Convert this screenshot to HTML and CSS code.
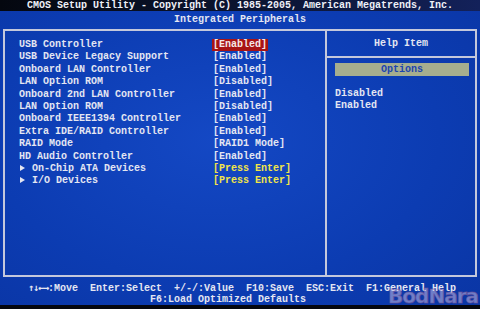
FILE: index.html
```html
<!DOCTYPE html>
<html lang="en">
  <head>
    <meta charset="UTF-8" />
    <meta name="viewport" content="width=device-width, initial-scale=1.0" />
    <title>CMOS Setup Utility</title>
    <link rel="stylesheet" href="styles.css">
  </head>
  <body>
    <!-- top bar -->
    <div class="top-bar">CMOS Setup Utility - Copyright (C) 1985-2005, American Megatrends, Inc.</div>
    <div class="page-title">Integrated Peripherals</div>

    <!-- main frame -->
    <div class="frame">
      <ul class="setting-list">
        <li class="setting-row"><span>USB Controller</span><span class="value selected">[Enabled]</span></li>
        <li class="setting-row"><span>USB Device Legacy Support</span><span class="value">[Enabled]</span></li>
        <li class="setting-row"><span>Onboard LAN Controller</span><span class="value">[Enabled]</span></li>
        <li class="setting-row"><span>LAN Option ROM</span><span class="value">[Disabled]</span></li>
        <li class="setting-row"><span>Onboard 2nd LAN Controller</span><span class="value">[Enabled]</span></li>
        <li class="setting-row"><span>LAN Option ROM</span><span class="value">[Disabled]</span></li>
        <li class="setting-row"><span>Onboard IEEE1394 Controller</span><span class="value">[Enabled]</span></li>
        <li class="setting-row"><span>Extra IDE/RAID Controller</span><span class="value">[Enabled]</span></li>
        <li class="setting-row"><span>RAID Mode</span><span class="value">[RAID1 Mode]</span></li>
        <li class="setting-row"><span>HD Audio Controller</span><span class="value">[Enabled]</span></li>
        <li class="setting-row"><span><i class="arrow"></i>On-Chip ATA Devices</span><span class="value sub">[Press Enter]</span></li>
        <li class="setting-row"><span><i class="arrow"></i>I/O Devices</span><span class="value sub">[Press Enter]</span></li>
      </ul>
      <div class="help-panel">
        <div class="help-title">Help Item</div>
        <div class="options-bar">Options</div>
        <ul class="option-list">
          <li>Disabled</li>
          <li>Enabled</li>
        </ul>
      </div>
    </div>

    <!-- key help -->
    <div class="key-help">
      <div class="key-line first"><span class="arrows">↑↓←→</span>:Move  Enter:Select  +/-/:Value  F10:Save  ESC:Exit  F1:General Help</div>
      <div class="key-line second">F6:Load Optimized Defaults</div>
    </div>
    <div class="bottom-strip"></div>
    <div class="watermark">BodNara</div>
  </body>
</html>
```

FILE: styles.css
```css
/*global*/
* {
  margin: 0;
  padding: 0;
  box-sizing: border-box;
}

body {
  width: 480px;
  height: 309px;
  overflow: hidden;
  position: relative;
  background: radial-gradient(ellipse at 45% 45%, #1448c4 0%, #0c3cb2 60%, #0a35a4 100%);
  font-family: "Liberation Mono", "DejaVu Sans Mono", monospace;
  font-size: 10px;
  font-weight: bold;
  color: #e4e6f2;
}

ul {
  list-style: none;
}

/*header*/
.top-bar {
  height: 11px;
  line-height: 11px;
  text-align: center;
  white-space: pre;
  background: linear-gradient(90deg, #04070f 0%, #0b1533 55%, #13215a 100%);
  color: #eef0f8;
}

.page-title {
  height: 18px;
  line-height: 17px;
  text-align: center;
}

/*frame*/
.frame {
  height: 248px;
  margin: 0 3px 0 3px;
  border: 2px solid #c4c8dc;
  display: grid;
  grid-template-columns: 322px 1fr;
}

.setting-list {
  padding: 8px 0 0 14px;
  border-right: 2px solid #c4c8dc;
}

.setting-row {
  display: grid;
  grid-template-columns: 194px auto;
  height: 12.4px;
  line-height: 12.4px;
  white-space: pre;
}

.value {
  justify-self: start;
}

.selected {
  background-color: #a81414;
  color: #f4e8e8;
  padding: 0 1px;
  margin-left: -1px;
}

.sub {
  color: #f2e648;
}

.arrow {
  display: inline-block;
  width: 0;
  height: 0;
  border-top: 3px solid transparent;
  border-bottom: 3px solid transparent;
  border-left: 5px solid #e4e6f2;
  margin: 0 7px 0 1px;
}

/*help*/
.help-title {
  height: 27px;
  line-height: 26px;
  text-align: center;
  border-bottom: 2px solid #c4c8dc;
}

.options-bar {
  margin: 5px 6px 0 8px;
  height: 13px;
  line-height: 13px;
  text-align: center;
  background-color: #a6ae8e;
  color: #1c44ae;
}

.option-list {
  padding: 12px 0 0 8px;
}

.option-list li {
  height: 12px;
  line-height: 12px;
}

/*footer*/
.key-help {
  padding-top: 5px;
  text-align: center;
}

.key-line {
  height: 12px;
  line-height: 12px;
  white-space: pre;
  overflow: hidden;
}

.key-line.first {
  padding-left: 4px;
}

.key-line.second {
  padding-right: 24px;
}

.arrows {
  font-family: "DejaVu Sans Mono", monospace;
  letter-spacing: -1px;
}

.bottom-strip {
  position: absolute;
  left: 0;
  right: 0;
  bottom: 0;
  height: 4px;
  background-color: #05070f;
}

.watermark {
  position: absolute;
  right: 2px;
  bottom: 1px;
  font-family: "DejaVu Sans", sans-serif;
  font-size: 20px;
  font-weight: bold;
  letter-spacing: -1px;
  color: rgba(200, 190, 230, 0.55);
  -webkit-text-stroke: 1px rgba(110, 80, 150, 0.6);
}
```
